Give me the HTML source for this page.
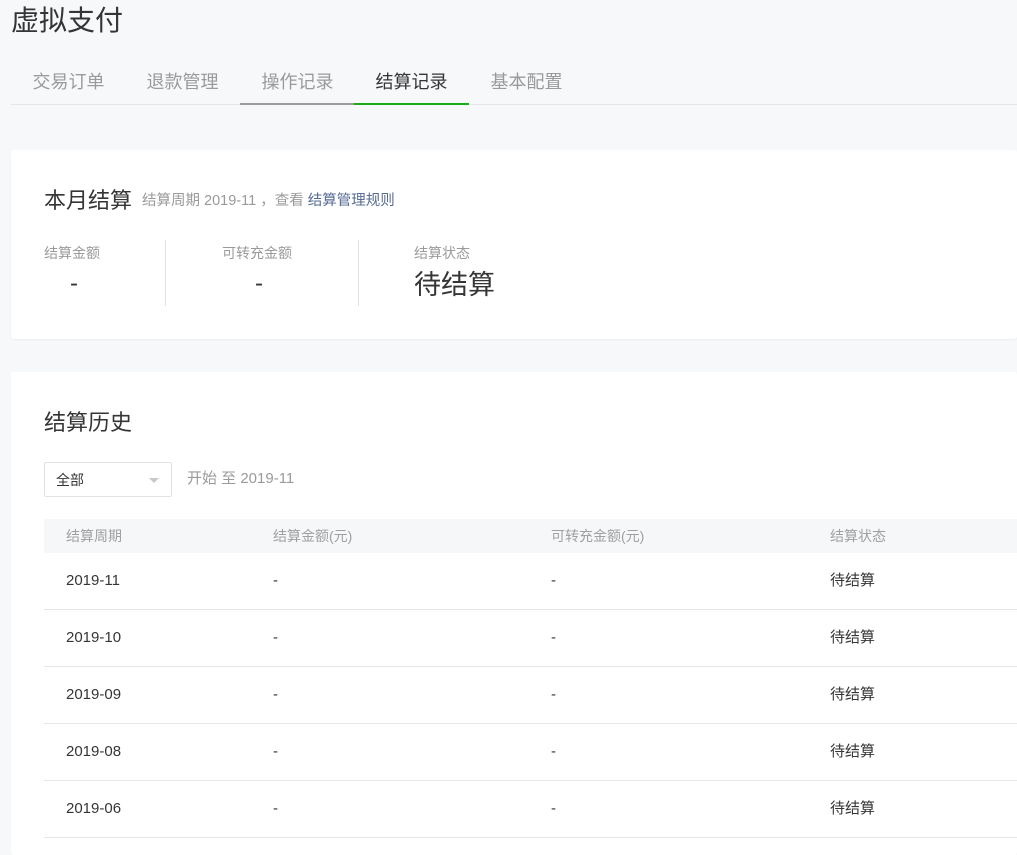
<!DOCTYPE html>
<html style="width:1017px;height:855px;overflow:hidden"><head><meta charset="utf-8"><style>
*{margin:0;padding:0;box-sizing:border-box}
body{width:1017px;height:855px;overflow:hidden;background:#f7f8fa;font-family:"Liberation Sans","Noto Sans CJK SC",sans-serif;position:relative;color:#353535}
.a{position:absolute;white-space:nowrap}
.tab{position:absolute;top:70px;width:115px;text-align:center;font-size:18px;color:#9a9a9a;line-height:24px}
.card{position:absolute;left:11px;right:0;background:#fff;border-radius:3px}
.th{position:absolute;top:0;font-size:14px;color:#a0a0a0;line-height:34px}
.row{position:absolute;left:0;right:0;height:57px;border-bottom:1px solid #e7e7e7;font-size:15px;color:#353535}
.row span{position:absolute;top:0;line-height:56px}
</style></head><body>
<div class="a" style="left:11px;top:1px;font-size:28px;line-height:40px;color:#353535">虚拟支付</div>
<div class="a" style="left:11px;right:0;top:104px;height:1px;background:#e6e6e6"></div>
<div class="tab" style="left:11px">交易订单</div>
<div class="tab" style="left:125px">退款管理</div>
<div class="tab" style="left:240px">操作记录</div>
<div class="tab" style="left:354px;color:#353535">结算记录</div>
<div class="tab" style="left:469px">基本配置</div>
<div class="a" style="left:240px;top:103px;width:114px;height:2px;background:#9a9a9a"></div>
<div class="a" style="left:354px;top:103px;width:115px;height:2px;background:#1aad19"></div>

<div class="card" style="top:150px;height:189px;box-shadow:0 1px 2px rgba(0,0,0,.05)">
  <div class="a" style="left:33px;top:37px;font-size:22px;line-height:28px">本月结算</div>
  <div class="a" style="left:131px;top:41px;font-size:14.5px;line-height:20px;color:#9a9a9a">结算周期 2019-11 ，查看 <span style="color:#576b95">结算管理规则</span></div>
  <div class="a" style="left:33px;top:93px;font-size:14px;color:#9a9a9a">结算金额</div>
  <div class="a" style="left:59px;top:120px;font-size:24px">-</div>
  <div class="a" style="left:154px;top:90px;width:1px;height:66px;background:#e2e2e2"></div>
  <div class="a" style="left:211px;top:93px;font-size:14px;color:#9a9a9a">可转充金额</div>
  <div class="a" style="left:244px;top:120px;font-size:24px">-</div>
  <div class="a" style="left:347px;top:90px;width:1px;height:66px;background:#e2e2e2"></div>
  <div class="a" style="left:403px;top:93px;font-size:14px;color:#9a9a9a">结算状态</div>
  <div class="a" style="left:403px;top:118px;font-size:27px;line-height:34px">待结算</div>
</div>

<div class="card" style="top:372px;height:483px;overflow:hidden">
  <div class="a" style="left:33px;top:37px;font-size:22px;line-height:28px">结算历史</div>
  <div class="a" style="left:33px;top:90px;width:128px;height:35px;border:1px solid #e2e2e2;border-radius:2px;background:#fff">
    <span class="a" style="left:11px;top:7px;font-size:14px;line-height:20px">全部</span>
    <span class="a" style="left:104px;top:15px;width:0;height:0;border-left:5px solid transparent;border-right:5px solid transparent;border-top:5px solid #c8c8c8"></span>
  </div>
  <div class="a" style="left:176px;top:97px;font-size:15px;line-height:20px;color:#9a9a9a">开始 至 2019-11</div>
  <div class="a" style="left:33px;right:0;top:147px;height:500px">
    <div class="a" style="left:0;right:0;top:0;height:34px;background:#f6f7f9"></div>
    <span class="th" style="left:22px">结算周期</span>
    <span class="th" style="left:229px">结算金额(元)</span>
    <span class="th" style="left:507px">可转充金额(元)</span>
    <span class="th" style="left:786px">结算状态</span>
    <div class="row" style="top:34px"><span style="left:22px">2019-11</span><span style="left:229px">-</span><span style="left:507px">-</span><span style="left:786px">待结算</span></div>
    <div class="row" style="top:91px"><span style="left:22px">2019-10</span><span style="left:229px">-</span><span style="left:507px">-</span><span style="left:786px">待结算</span></div>
    <div class="row" style="top:148px"><span style="left:22px">2019-09</span><span style="left:229px">-</span><span style="left:507px">-</span><span style="left:786px">待结算</span></div>
    <div class="row" style="top:205px"><span style="left:22px">2019-08</span><span style="left:229px">-</span><span style="left:507px">-</span><span style="left:786px">待结算</span></div>
    <div class="row" style="top:262px"><span style="left:22px">2019-06</span><span style="left:229px">-</span><span style="left:507px">-</span><span style="left:786px">待结算</span></div>
  </div>
</div>
</body></html>
